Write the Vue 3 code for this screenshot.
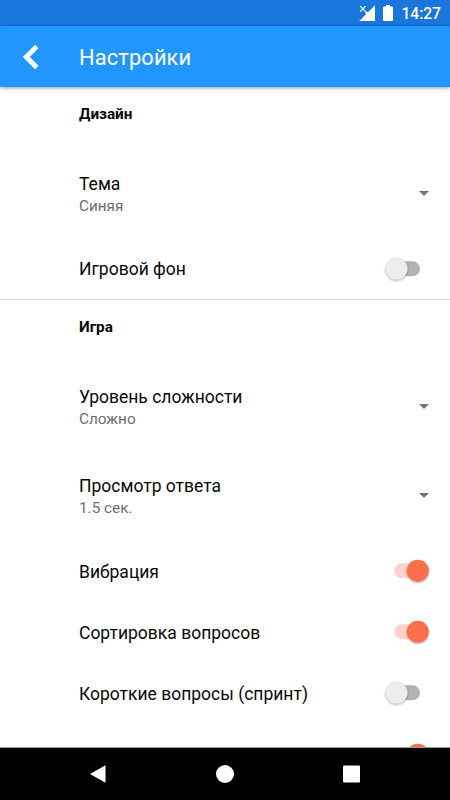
<script setup>
import { ref } from 'vue'

const sections = ref([
  {
    title: 'Дизайн',
    items: [
      { label: 'Тема', value: 'Синяя' },
      { label: 'Игровой фон', on: false },
    ],
  },
  {
    title: 'Игра',
    items: [
      { label: 'Уровень сложности', value: 'Сложно' },
      { label: 'Просмотр ответа', value: '1.5 сек.' },
      { label: 'Вибрация', on: true },
      { label: 'Сортировка вопросов', on: true },
      { label: 'Короткие вопросы (спринт)', on: false },
      { label: '', on: true },
    ],
  },
])

function toggle(item) {
  if (!item.value) item.on = !item.on
}
</script>

<template>
  <div class="screen">
    <div class="status">
      <svg class="signal" width="16" height="16" viewBox="0 0 16 16">
        <path d="M16 0.3V16H0.3L7 9.2L5.8 8L7.6 6.2L9 7.3Z" fill="#fff" />
        <path d="M1.2 1.2L6.6 6.6M6.6 1.2L1.2 6.6" stroke="#fff" stroke-width="1.2" />
      </svg>
      <svg class="battery" width="10" height="16" viewBox="0 0 10 16">
        <path d="M3 0H7V1.5H9Q10 1.5 10 2.5V15Q10 16 9 16H1Q0 16 0 15V2.5Q0 1.5 1 1.5H3Z" fill="#fff" />
      </svg>
      <span class="clock">14:27</span>
    </div>

    <header class="bar">
      <svg class="back" width="16" height="26" viewBox="0 0 16 26">
        <path d="M13.8 2.6L3.3 13L13.8 23.4" fill="none" stroke="#fff" stroke-width="4.9" />
      </svg>
      <h1>Настройки</h1>
    </header>

    <main class="content">
      <section v-for="section in sections" :key="section.title" class="section">
        <h2>{{ section.title }}</h2>
        <div
          v-for="(item, i) in section.items"
          :key="i"
          class="row"
          :class="{ tall: item.value }"
          @click="toggle(item)"
        >
          <div class="text">
            <div class="label">{{ item.label }}</div>
            <div v-if="item.value" class="value">{{ item.value }}</div>
          </div>
          <svg v-if="item.value" class="arrow" width="10" height="5" viewBox="0 0 10 5">
            <path d="M0 0H10L5 5Z" fill="#727276" />
          </svg>
          <svg v-else class="switch" width="50" height="30" viewBox="0 0 50 30">
            <template v-if="item.on">
              <rect x="14.3" y="7.3" width="30" height="15" rx="7.5" fill="#ffd3cb" />
              <circle class="thumb" cx="37.8" cy="14.8" r="11" fill="#ff6e4a" />
            </template>
            <template v-else>
              <rect x="10" y="7.3" width="30" height="15" rx="7.5" fill="#b3b1b4" />
              <circle class="thumb" cx="16.5" cy="14.8" r="11" fill="#ededee" />
            </template>
          </svg>
        </div>
      </section>
    </main>

    <nav class="nav">
      <svg width="16" height="20" viewBox="0 0 16 20">
        <path d="M15.5 1.3V18.7L0.8 10.6Q0 10 0.8 9.4Z" fill="#fff" />
      </svg>
      <svg width="18" height="20" viewBox="0 0 18 20">
        <circle cx="9" cy="10" r="9" fill="#fff" />
      </svg>
      <svg width="17" height="20" viewBox="0 0 17 20">
        <rect x="0" y="1.5" width="17" height="17" rx="1" fill="#fff" />
      </svg>
    </nav>
  </div>
</template>

<style>
body {
  margin: 0;
}
</style>

<style scoped>
.screen {
  display: flex;
  flex-direction: column;
  width: 450px;
  height: 800px;
  overflow: hidden;
  background: #fff;
  color: #080808;
  font-family: Roboto, sans-serif;
}
.status {
  flex: none;
  display: flex;
  align-items: center;
  justify-content: flex-end;
  box-sizing: border-box;
  height: 26px;
  padding-right: 9px;
  background: #1976dd;
  color: #fff;
}
.signal {
  margin-right: 8px;
}
.battery {
  margin-right: 8px;
}
.clock {
  font-size: 15.6px;
  line-height: 26px;
  padding-top: 2px;
  font-weight: 500;
}
.bar {
  flex: none;
  display: flex;
  align-items: center;
  height: 61px;
  padding-left: 23px;
  background: #2196ff;
  color: #fff;
  box-shadow: 0 1px 4px rgba(0, 0, 0, 0.4);
  z-index: 1;
}
h1 {
  margin: 2px 0 0 40px;
  font-size: 21.9px;
  font-weight: 400;
  letter-spacing: 0.1px;
}
.content {
  flex: 1;
  min-height: 0;
  overflow: hidden;
  border-bottom: 1px solid #9a9a9a;
}
.section + .section {
  border-top: 1px solid #dedee0;
}
h2 {
  box-sizing: border-box;
  height: 63px;
  margin: 0;
  padding: 17px 0 0 79px;
  font-size: 15.3px;
  line-height: 20px;
  font-weight: 700;
}
.section + .section h2 {
  height: 62px;
}
.row {
  display: flex;
  align-items: center;
  justify-content: space-between;
  box-sizing: border-box;
  height: 61px;
  padding: 0 20px 0 79px;
}
.section + .section .row:not(.tall) {
  height: 61.3px;
}
.section + .section .row:not(.tall) .text {
  padding-top: 2px;
}
.tall {
  height: 89px;
}
.section:first-child .tall {
  height: 88px;
}
.label {
  font-size: 17.5px;
  line-height: 24px;
}
.value {
  font-size: 15.3px;
  line-height: 20px;
  color: #6c6b75;
}
.arrow {
  margin-right: 1px;
}
.section:first-child .arrow {
  margin-bottom: 2px;
}
.thumb {
  filter: drop-shadow(0 1px 1px rgba(0, 0, 50, 0.32));
}
.nav {
  flex: none;
  display: flex;
  align-items: center;
  justify-content: space-between;
  box-sizing: border-box;
  height: 52px;
  padding: 0 90px;
  background: #000;
}
</style>
